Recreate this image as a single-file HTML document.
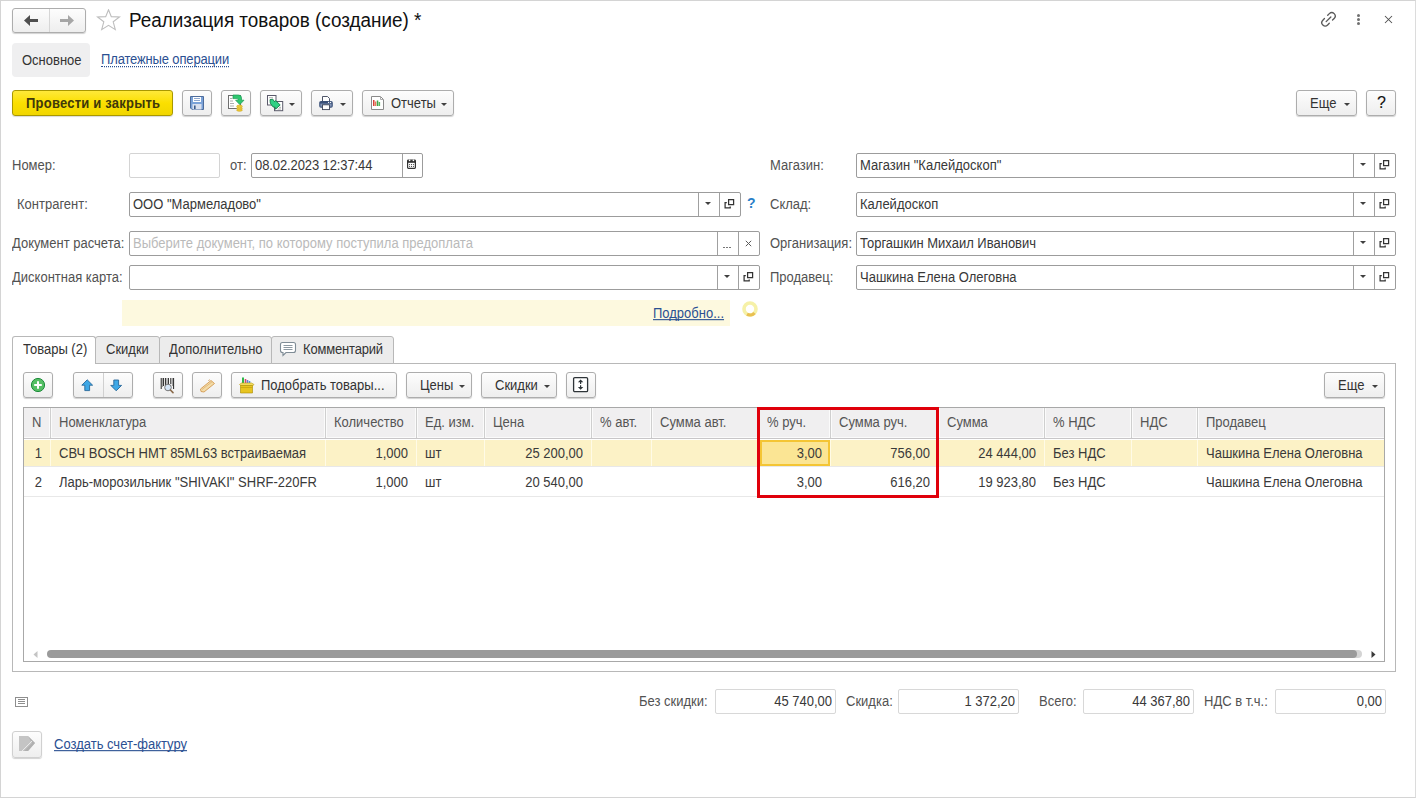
<!DOCTYPE html>
<html><head><meta charset="utf-8">
<style>
*{box-sizing:border-box;margin:0;padding:0}
html,body{width:1416px;height:798px;overflow:hidden;background:#fff}
body{font-family:"Liberation Sans",sans-serif;font-size:13px;color:#525252;position:relative}
.a{position:absolute}
.frame{left:0;top:0;width:1416px;height:798px;border:1px solid #d4d4d4;border-right-color:#dcdcdc}
.btn{position:absolute;border:1px solid #adadad;border-radius:3px;background:linear-gradient(#fdfdfd,#eeeeee);box-shadow:0 1px 1px rgba(0,0,0,.18);}
.lbl{position:absolute;white-space:nowrap;line-height:15px}
.inp{position:absolute;border:1px solid #9c9c9c;border-radius:2px;background:#fff;height:25px}
.inp .t{position:absolute;left:3px;top:4px;color:#383838;white-space:nowrap;line-height:15px}
.inp .d{position:absolute;top:0;bottom:0;border-left:1px solid #a0a0a0}
.tri{position:absolute;width:0;height:0;border-left:4px solid transparent;border-right:4px solid transparent;border-top:4px solid #444}
.tri2{position:absolute;width:0;height:0;border-left:3px solid transparent;border-right:3px solid transparent;border-top:3px solid #404040}
.col{position:absolute;top:0;height:30px;border-right:1px solid #dadada}
.hd{position:absolute;top:7px;white-space:nowrap;color:#555;line-height:15px}
.cell{position:absolute;white-space:nowrap;color:#3a3a3a;line-height:15px}
.r{text-align:right}
.lbl,.hd,.cell,.inp .t,.link{transform:scaleY(1.1);transform-origin:0 12px}
.link{color:#2b5092;text-decoration-skip-ink:none;white-space:nowrap;position:absolute;line-height:15px}
</style></head><body>
<div class="a frame"></div>

<!-- header -->
<div class="btn" style="left:12px;top:8px;width:74px;height:25px"></div>
<div class="a" style="left:49px;top:9px;width:1px;height:23px;background:#d6d6d6"></div>
<svg class="a" style="left:24px;top:15px" width="15" height="11" viewBox="0 0 15 11"><path d="M0 5.5 L6 0 V4 H14 V7 H6 V11 Z" fill="#4f4f4f"/></svg>
<svg class="a" style="left:60px;top:15px" width="15" height="11" viewBox="0 0 15 11"><path d="M14 5.5 L8 0 V4 H0 V7 H8 V11 Z" fill="#a6a6a6"/></svg>
<svg class="a" style="left:96px;top:9px" width="25" height="22" viewBox="0 0 25 22"><path d="M12.5 0.8 L15.3 7.6 L23.5 8 L17.2 12.8 L19.3 20.6 L12.5 16.3 L5.7 20.6 L7.8 12.8 L1.5 8 L9.7 7.6 Z" fill="none" stroke="#bdbdbd" stroke-width="1.1"/></svg>
<div class="lbl" style="left:129px;top:10px;font-size:18.9px;line-height:22px;color:#111;transform-origin:0 17.5px">Реализация товаров (создание) *</div>

<svg class="a" style="left:1318px;top:9px" width="21" height="21" viewBox="0 0 21 21"><g transform="translate(10.5 10.3) rotate(-45)" fill="none" stroke="#5a5a5a" stroke-width="1.35" stroke-linecap="round"><path d="M2.3 -3.4 H4.6 A3.4 3.4 0 0 1 4.6 3.4 H2.3"/><path d="M-2.3 3.4 H-4.6 A3.4 3.4 0 0 1 -4.6 -3.4 H-2.3"/><path d="M-3.3 0 H3.3"/></g></svg>
<div class="a" style="left:1357px;top:14px;width:3px;height:3px;border-radius:50%;background:#707070"></div>
<div class="a" style="left:1357px;top:18px;width:3px;height:3px;border-radius:50%;background:#707070"></div>
<div class="a" style="left:1357px;top:22px;width:3px;height:3px;border-radius:50%;background:#707070"></div>
<svg class="a" style="left:1384px;top:15px" width="9" height="9" viewBox="0 0 9 9"><path d="M1 1 L8 8 M8 1 L1 8" stroke="#505050" stroke-width="1.05"/></svg>

<!-- page tabs -->
<div class="a" style="left:12px;top:43px;width:78px;height:34px;background:#efeff0;border-radius:4px"></div>
<div class="lbl" style="left:22px;top:53px;color:#333">Основное</div>
<div class="link" style="left:101px;top:53px;border-bottom:1px dotted #2b5092;line-height:13px;letter-spacing:-0.15px;color:#2b5092">Платежные операции</div>


<!-- toolbar -->
<div class="a" style="left:12px;top:90px;width:161px;height:26px;border:1px solid #a99800;border-radius:3px;background:linear-gradient(#ffe93a,#fbdf00 50%,#f1d600);box-shadow:0 1px 1px rgba(0,0,0,.15)"></div>
<div class="lbl" style="left:26px;top:96px;font-weight:bold;color:#40380a;letter-spacing:0.22px">Провести и закрыть</div>

<div class="btn" style="left:182px;top:90px;width:30px;height:26px"></div>
<svg class="a" style="left:190px;top:96px" width="14" height="14" viewBox="0 0 14 14"><path d="M0.5 0.5 H13.5 V13.5 H2 L0.5 12 Z" fill="#7aa2d8" stroke="#4d6c9c"/><rect x="3" y="1" width="8" height="5" fill="#fff"/><path d="M4 2.5H10M4 4.5H10" stroke="#8fa8d0"/><rect x="2.5" y="8" width="9" height="5.5" fill="#d9e0ee"/><rect x="4" y="9.5" width="1.6" height="3.5" fill="#3a5a8a"/></svg>

<div class="btn" style="left:221px;top:90px;width:30px;height:26px"></div>
<svg class="a" style="left:227px;top:94px" width="18" height="18" viewBox="0 0 18 18"><rect x="1.5" y="1.5" width="12" height="13" fill="#fff" stroke="#6f6f6f"/><path d="M3 4.5H5.5M3 7H6M3 9.5H7M3 12H7" stroke="#999" stroke-width="0.8"/><path d="M6 1 H11.5 Q14.5 1 14.5 4 V6.2 H17 L12.8 10.6 L8.6 6.2 H11 V5.2 Q11 4.6 10.4 4.6 H6 Z" fill="#2ec770" stroke="#1b9a55" stroke-width="0.7"/><ellipse cx="12.5" cy="12.3" rx="2.9" ry="1.2" fill="#f4d448" stroke="#c9a318" stroke-width="0.6"/><ellipse cx="12.5" cy="14.2" rx="2.9" ry="1.2" fill="#f4d448" stroke="#c9a318" stroke-width="0.6"/><ellipse cx="12.5" cy="16.1" rx="2.9" ry="1.2" fill="#efc935" stroke="#c9a318" stroke-width="0.6"/></svg>

<div class="btn" style="left:260px;top:90px;width:42px;height:26px"></div>
<svg class="a" style="left:266px;top:94px" width="18" height="18" viewBox="0 0 18 18"><rect x="1.5" y="1.5" width="8.5" height="9.5" fill="#fff" stroke="#5a5a6a" stroke-width="1"/><path d="M3 3.7H7" stroke="#999" stroke-width="0.8"/><rect x="8.5" y="7.5" width="8.2" height="9.2" fill="#fff" stroke="#5a5a6a" stroke-width="1"/><path d="M11.5 15H15M13 13.3H15" stroke="#999" stroke-width="0.8"/><path d="M4 5.6 L6.8 5.2 L8.6 7.8 L9.6 6.6 L14.2 10.9 L9.6 15.2 L9.3 13.3 L7 12.9 L4.3 9.2 Z" fill="#30d184" stroke="#138048" stroke-width="0.9" stroke-linejoin="miter"/></svg>
<div class="tri2" style="left:289px;top:103px"></div>

<div class="btn" style="left:311px;top:90px;width:42px;height:26px"></div>
<svg class="a" style="left:318px;top:95px" width="16" height="16" viewBox="0 0 16 16"><path d="M4.5 1.5 H9.5 L11.5 3.5 V7 H4.5 Z" fill="#fff" stroke="#3c4458" stroke-width="0.9"/><rect x="1.2" y="6" width="13.6" height="6.8" rx="1.8" fill="#3a5078"/><rect x="2.4" y="8.6" width="11.2" height="3" fill="#8396b8"/><circle cx="10.6" cy="7.4" r="0.65" fill="#fff"/><circle cx="12.6" cy="7.4" r="0.65" fill="#fff"/><rect x="4.5" y="9.8" width="7" height="4.8" fill="#fff" stroke="#3c4458" stroke-width="0.9"/></svg>
<div class="tri2" style="left:340px;top:103px"></div>

<div class="btn" style="left:362px;top:90px;width:92px;height:26px"></div>
<svg class="a" style="left:371px;top:96px" width="13" height="14" viewBox="0 0 13 14"><path d="M0.5 0.5 H9.5 L12.5 3.5 V13.5 H0.5 Z" fill="#fff" stroke="#8a8a8a"/><path d="M9.5 0.5 V3.5 H12.5" fill="none" stroke="#aaa"/><rect x="2" y="4" width="1.5" height="6" fill="#d9413a"/><rect x="3.8" y="5.5" width="1.5" height="4.5" fill="#e57a5a"/><rect x="5.8" y="4.5" width="1.5" height="5.5" fill="#3fa34a"/><rect x="7.6" y="6" width="1.5" height="4" fill="#57b85f"/></svg>
<div class="lbl" style="left:391px;top:96px;color:#333">Отчеты</div>
<div class="tri2" style="left:441px;top:103px"></div>

<div class="btn" style="left:1296px;top:90px;width:61px;height:26px"></div>
<div class="lbl" style="left:1310px;top:96px;color:#333">Еще</div>
<div class="tri2" style="left:1344px;top:103px"></div>
<div class="btn" style="left:1366px;top:90px;width:30px;height:26px"></div>
<div class="lbl" style="left:1377px;top:94px;color:#111;font-size:16px;line-height:18px;-webkit-text-stroke:0.1px #111;transform:none">?</div>

<!-- form left -->
<div class="lbl" style="left:12px;top:158px">Номер:</div>
<div class="inp" style="left:129px;top:153px;width:91px;border-color:#d4d4d4"></div>
<div class="lbl" style="left:230px;top:158px">от:</div>
<div class="inp" style="left:251px;top:153px;width:172px"><div class="t" style="letter-spacing:-0.1px">08.02.2023 12:37:44</div><div class="d" style="left:150px"></div></div>
<svg class="a" style="left:407px;top:159px" width="9" height="10" viewBox="0 0 9 10"><rect x="0.6" y="1.2" width="7.8" height="8.2" rx="0.8" fill="#fff" stroke="#333" stroke-width="1.2"/><rect x="0.6" y="1.2" width="7.8" height="2.6" fill="#333"/><circle cx="2.6" cy="1.4" r="0.8" fill="#fff"/><circle cx="6.4" cy="1.4" r="0.8" fill="#fff"/><circle cx="2.6" cy="5.6" r="0.55" fill="#333"/><circle cx="4.5" cy="5.6" r="0.55" fill="#333"/><circle cx="6.4" cy="5.6" r="0.55" fill="#333"/><circle cx="2.6" cy="7.5" r="0.55" fill="#333"/><circle cx="4.5" cy="7.5" r="0.55" fill="#333"/><circle cx="6.4" cy="7.5" r="0.55" fill="#333"/></svg>
<div class="lbl" style="left:17px;top:197px">Контрагент:</div>
<div class="inp" style="left:129px;top:192px;width:612px"><div class="t">ООО "Мармеладово"</div><div class="d" style="left:568px"></div><div class="d" style="left:589px"></div></div><div class="tri2" style="left:705px;top:202px"></div><svg class="a" style="left:724px;top:199px" width="11" height="10" viewBox="0 0 11 10"><path d="M4.6 0.6h5v5h-5z M2.8 3.6H1.1V8.9H6.2V7.6" fill="none" stroke="#333" stroke-width="1.25"/></svg>
<div class="lbl" style="left:747px;top:196px;color:#2a7fc8;font-size:14px;font-weight:bold">?</div>
<div class="lbl" style="left:12px;top:236px">Документ расчета:</div>
<div class="inp" style="left:129px;top:231px;width:631px"><div class="t" style="color:#bababa">Выберите документ, по которому поступила предоплата</div><div class="d" style="left:587px"></div><div class="d" style="left:608px"></div></div><div class="a" style="left:723px;top:247px;width:2px;height:1px;background:#777"></div><div class="a" style="left:726px;top:247px;width:2px;height:1px;background:#777"></div><div class="a" style="left:729px;top:247px;width:2px;height:1px;background:#777"></div><svg class="a" style="left:745px;top:240px" width="7" height="7" viewBox="0 0 7 7"><path d="M0.8 0.8L6.2 6.2M6.2 0.8L0.8 6.2" stroke="#5a5a5a" stroke-width="1"/></svg>
<div class="lbl" style="left:12px;top:270px">Дисконтная карта:</div>
<div class="inp" style="left:129px;top:265px;width:631px"><div class="d" style="left:587px"></div><div class="d" style="left:608px"></div></div><div class="tri2" style="left:724px;top:275px"></div><svg class="a" style="left:743px;top:272px" width="11" height="10" viewBox="0 0 11 10"><path d="M4.6 0.6h5v5h-5z M2.8 3.6H1.1V8.9H6.2V7.6" fill="none" stroke="#333" stroke-width="1.25"/></svg>
<div class="a" style="left:122px;top:300px;width:608px;height:26px;background:#fdf9df"></div>
<div class="link" style="left:653px;top:306px;text-decoration:underline">Подробно...</div>
<svg class="a" style="left:740px;top:299px" width="20" height="20" viewBox="0 0 20 20"><circle cx="10" cy="10" r="6" fill="none" stroke="#f6f1a8" stroke-width="3.6"/><path d="M7 15.2 A6 6 0 0 0 14.5 14" fill="none" stroke="#e9c052" stroke-width="3.2"/></svg>
<!-- form right -->
<div class="lbl" style="left:770px;top:158px">Магазин:</div>
<div class="inp" style="left:856px;top:153px;width:540px"><div class="t">Магазин "Калейдоскоп"</div><div class="d" style="left:496px"></div><div class="d" style="left:517px"></div></div><div class="tri2" style="left:1360px;top:163px"></div><svg class="a" style="left:1379px;top:160px" width="11" height="10" viewBox="0 0 11 10"><path d="M4.6 0.6h5v5h-5z M2.8 3.6H1.1V8.9H6.2V7.6" fill="none" stroke="#333" stroke-width="1.25"/></svg>
<div class="lbl" style="left:770px;top:197px">Склад:</div>
<div class="inp" style="left:856px;top:192px;width:540px"><div class="t">Калейдоскоп</div><div class="d" style="left:496px"></div><div class="d" style="left:517px"></div></div><div class="tri2" style="left:1360px;top:202px"></div><svg class="a" style="left:1379px;top:199px" width="11" height="10" viewBox="0 0 11 10"><path d="M4.6 0.6h5v5h-5z M2.8 3.6H1.1V8.9H6.2V7.6" fill="none" stroke="#333" stroke-width="1.25"/></svg>
<div class="lbl" style="left:770px;top:236px">Организация:</div>
<div class="inp" style="left:856px;top:231px;width:540px"><div class="t">Торгашкин Михаил Иванович</div><div class="d" style="left:496px"></div><div class="d" style="left:517px"></div></div><div class="tri2" style="left:1360px;top:241px"></div><svg class="a" style="left:1379px;top:238px" width="11" height="10" viewBox="0 0 11 10"><path d="M4.6 0.6h5v5h-5z M2.8 3.6H1.1V8.9H6.2V7.6" fill="none" stroke="#333" stroke-width="1.25"/></svg>
<div class="lbl" style="left:770px;top:270px">Продавец:</div>
<div class="inp" style="left:856px;top:265px;width:540px"><div class="t">Чашкина Елена Олеговна</div><div class="d" style="left:496px"></div><div class="d" style="left:517px"></div></div><div class="tri2" style="left:1360px;top:275px"></div><svg class="a" style="left:1379px;top:272px" width="11" height="10" viewBox="0 0 11 10"><path d="M4.6 0.6h5v5h-5z M2.8 3.6H1.1V8.9H6.2V7.6" fill="none" stroke="#333" stroke-width="1.25"/></svg>

<!-- tabs -->
<div class="a" style="left:12px;top:363px;width:1384px;height:309px;border:1px solid #b8b8b8"></div>
<div class="a" style="left:95px;top:336px;width:65px;height:28px;background:#ececec;border:1px solid #b8b8b8;border-radius:3px 3px 0 0"></div>
<div class="a" style="left:159px;top:336px;width:113px;height:28px;background:#ececec;border:1px solid #b8b8b8;border-radius:3px 3px 0 0"></div>
<div class="a" style="left:271px;top:336px;width:123px;height:28px;background:#ececec;border:1px solid #b8b8b8;border-radius:3px 3px 0 0"></div>
<div class="a" style="left:12px;top:336px;width:84px;height:28px;background:#fff;border:1px solid #b8b8b8;border-bottom:none;border-radius:3px 3px 0 0"></div>
<div class="lbl" style="left:23px;top:342px;color:#333">Товары (2)</div>
<div class="lbl" style="left:106px;top:342px;color:#333">Скидки</div>
<div class="lbl" style="left:169px;top:342px;color:#333">Дополнительно</div>
<svg class="a" style="left:279px;top:341px" width="18" height="16" viewBox="0 0 18 16"><path d="M3.5 1.5 H14.5 Q16.5 1.5 16.5 3.5 V9.5 Q16.5 11.5 14.5 11.5 H7 L4 14.5 V11.5 H3.5 Q1.5 11.5 1.5 9.5 V3.5 Q1.5 1.5 3.5 1.5 Z" fill="#fff" stroke="#7f8c96" stroke-width="1.1"/><path d="M4.5 4.5H13.5M4.5 6.5H13.5M4.5 8.5H13.5" stroke="#7f8c96" stroke-width="0.9"/></svg>
<div class="lbl" style="left:303px;top:342px;color:#333;letter-spacing:-0.18px">Комментарий</div>

<!-- table toolbar -->
<div class="btn" style="left:23px;top:372px;width:30px;height:26px"></div>
<svg class="a" style="left:30px;top:377px" width="16" height="16" viewBox="0 0 16 16"><circle cx="8" cy="8" r="6.6" fill="#55bf64" stroke="#1d8b3b" stroke-width="1"/><path d="M8 4.2V11.8M4.2 8H11.8" stroke="#fff" stroke-width="2"/></svg>
<div class="btn" style="left:73px;top:372px;width:60px;height:26px"></div>
<div class="a" style="left:103px;top:373px;width:1px;height:24px;background:#d0d0d0"></div>
<svg class="a" style="left:81px;top:379px" width="13" height="13" viewBox="0 0 13 13"><path d="M6.2 0.8 L11.6 6.2 H8.6 V11.6 H3.8 V6.2 H0.8 Z" fill="#3ea8e6" stroke="#28689a" stroke-width="0.9" stroke-linejoin="miter"/></svg>
<svg class="a" style="left:110px;top:379px" width="13" height="13" viewBox="0 0 13 13"><path d="M6.2 11.8 L11.6 6.4 H8.6 V1 H3.8 V6.4 H0.8 Z" fill="#3ea8e6" stroke="#28689a" stroke-width="0.9" stroke-linejoin="miter"/></svg>
<div class="btn" style="left:153px;top:372px;width:30px;height:26px"></div>
<svg class="a" style="left:160px;top:377px" width="16" height="17" viewBox="0 0 16 17"><path d="M1.2 1v11M3.6 1v8M5.6 1v7M8.4 1v6M10.8 1v6M13.6 1v11" stroke="#222" stroke-width="1"/><path d="M2.4 1v9M7 1v6M12.4 1v8" stroke="#555" stroke-width="0.6"/><circle cx="8" cy="10.5" r="3.3" fill="#d6e6f8" stroke="#777" stroke-width="1"/><path d="M10.4 13 L13 15.6" stroke="#8a6a4a" stroke-width="1.6" stroke-linecap="round"/></svg>
<div class="btn" style="left:192px;top:372px;width:30px;height:26px"></div>
<svg class="a" style="left:199px;top:379px" width="17" height="14" viewBox="0 0 17 14"><path d="M1.5 10 L12 1.5 L15.5 4.5 L5 13 L2 12.5 Z" fill="#f3dca8" stroke="#d49a50" stroke-width="0.9"/><path d="M3 10.5 L13 2.8" stroke="#e0b070" stroke-width="0.8"/><path d="M9.5 2 L10.5 0.5" stroke="#c89048" stroke-width="0.8"/></svg>
<div class="btn" style="left:231px;top:372px;width:166px;height:26px"></div>
<svg class="a" style="left:239px;top:377px" width="16" height="17" viewBox="0 0 16 17"><path d="M4 0.5v8" stroke="#2db84a" stroke-width="2"/><path d="M6.5 2v7" stroke="#d84a6a" stroke-width="1.6"/><path d="M8.5 3v6" stroke="#6a7ad8" stroke-width="1.6"/><path d="M10.5 4v5" stroke="#4a9ad8" stroke-width="1.6"/><path d="M0.5 7.5 L2.5 6 H12.5 L15 7.5 L13.5 9 H2 Z" fill="#f2dc60" stroke="#b89a10" stroke-width="0.6"/><path d="M1.5 8.5 H13.5 V16 H1.5 Z" fill="#e7c420" stroke="#a88a00" stroke-width="0.6"/><path d="M1.5 10.5 H13.5" stroke="#c8a410" stroke-width="0.8"/></svg>
<div class="lbl" style="left:261px;top:378px;color:#333">Подобрать товары...</div>
<div class="btn" style="left:406px;top:372px;width:66px;height:26px"></div>
<div class="lbl" style="left:420px;top:378px;color:#333">Цены</div>
<div class="tri2" style="left:459px;top:385px"></div>
<div class="btn" style="left:481px;top:372px;width:76px;height:26px"></div>
<div class="lbl" style="left:495px;top:378px;color:#333">Скидки</div>
<div class="tri2" style="left:544px;top:385px"></div>
<div class="btn" style="left:566px;top:372px;width:30px;height:26px"></div>
<svg class="a" style="left:572px;top:376px" width="17" height="17" viewBox="0 0 17 17"><rect x="1.6" y="1.6" width="14" height="14" rx="1.2" fill="#fff" stroke="#2e3438" stroke-width="1.3"/><path d="M5.9 6.2 L8.6 3.4 L11.3 6.2 Z M5.9 11 L8.6 13.8 L11.3 11 Z" fill="#2e3438"/><path d="M8.6 5.5 V8 M8.6 9.2 V11.7" stroke="#2e3438" stroke-width="1.2"/></svg>
<div class="btn" style="left:1324px;top:372px;width:61px;height:26px"></div>
<div class="lbl" style="left:1338px;top:378px;color:#333">Еще</div>
<div class="tri2" style="left:1372px;top:385px"></div>

<!-- table -->
<div class="a" style="left:23px;top:407px;width:1362px;height:255px;border:1px solid #a8a8a8;overflow:hidden">
<div class="a" style="left:0;top:0;width:1360px;height:31px;background:#f0eff0;border-bottom:1px solid #c8c6c8"><div class="a" style="left:0;top:29px;width:1360px;height:1px;background:#fbfbfb"></div><div class="a" style="left:25px;top:0;width:1px;height:29px;background:#fbfbfb"></div><div class="a" style="left:26px;top:0;width:1px;height:30px;background:#cfcfcf"></div><div class="a" style="left:27px;top:0;width:1px;height:29px;background:#fbfbfb"></div><div class="hd" style="left:8px">N</div><div class="a" style="left:300px;top:0;width:1px;height:29px;background:#fbfbfb"></div><div class="a" style="left:301px;top:0;width:1px;height:30px;background:#cfcfcf"></div><div class="a" style="left:302px;top:0;width:1px;height:29px;background:#fbfbfb"></div><div class="hd" style="left:35px">Номенклатура</div><div class="a" style="left:391px;top:0;width:1px;height:29px;background:#fbfbfb"></div><div class="a" style="left:392px;top:0;width:1px;height:30px;background:#cfcfcf"></div><div class="a" style="left:393px;top:0;width:1px;height:29px;background:#fbfbfb"></div><div class="hd" style="left:310px">Количество</div><div class="a" style="left:459px;top:0;width:1px;height:29px;background:#fbfbfb"></div><div class="a" style="left:460px;top:0;width:1px;height:30px;background:#cfcfcf"></div><div class="a" style="left:461px;top:0;width:1px;height:29px;background:#fbfbfb"></div><div class="hd" style="left:401px">Ед. изм.</div><div class="a" style="left:566px;top:0;width:1px;height:29px;background:#fbfbfb"></div><div class="a" style="left:567px;top:0;width:1px;height:30px;background:#cfcfcf"></div><div class="a" style="left:568px;top:0;width:1px;height:29px;background:#fbfbfb"></div><div class="hd" style="left:469px">Цена</div><div class="a" style="left:626px;top:0;width:1px;height:29px;background:#fbfbfb"></div><div class="a" style="left:627px;top:0;width:1px;height:30px;background:#cfcfcf"></div><div class="a" style="left:628px;top:0;width:1px;height:29px;background:#fbfbfb"></div><div class="hd" style="left:576px">% авт.</div><div class="a" style="left:733px;top:0;width:1px;height:29px;background:#fbfbfb"></div><div class="a" style="left:734px;top:0;width:1px;height:30px;background:#cfcfcf"></div><div class="a" style="left:735px;top:0;width:1px;height:29px;background:#fbfbfb"></div><div class="hd" style="left:636px">Сумма авт.</div><div class="a" style="left:805px;top:0;width:1px;height:29px;background:#fbfbfb"></div><div class="a" style="left:806px;top:0;width:1px;height:30px;background:#cfcfcf"></div><div class="a" style="left:807px;top:0;width:1px;height:29px;background:#fbfbfb"></div><div class="hd" style="left:743px">% руч.</div><div class="a" style="left:913px;top:0;width:1px;height:29px;background:#fbfbfb"></div><div class="a" style="left:914px;top:0;width:1px;height:30px;background:#cfcfcf"></div><div class="a" style="left:915px;top:0;width:1px;height:29px;background:#fbfbfb"></div><div class="hd" style="left:815px">Сумма руч.</div><div class="a" style="left:1019px;top:0;width:1px;height:29px;background:#fbfbfb"></div><div class="a" style="left:1020px;top:0;width:1px;height:30px;background:#cfcfcf"></div><div class="a" style="left:1021px;top:0;width:1px;height:29px;background:#fbfbfb"></div><div class="hd" style="left:923px">Сумма</div><div class="a" style="left:1106px;top:0;width:1px;height:29px;background:#fbfbfb"></div><div class="a" style="left:1107px;top:0;width:1px;height:30px;background:#cfcfcf"></div><div class="a" style="left:1108px;top:0;width:1px;height:29px;background:#fbfbfb"></div><div class="hd" style="left:1029px">% НДС</div><div class="a" style="left:1172px;top:0;width:1px;height:29px;background:#fbfbfb"></div><div class="a" style="left:1173px;top:0;width:1px;height:30px;background:#cfcfcf"></div><div class="a" style="left:1174px;top:0;width:1px;height:29px;background:#fbfbfb"></div><div class="hd" style="left:1116px">НДС</div><div class="hd" style="left:1182px">Продавец</div></div>
<div class="a" style="left:0;top:32px;width:1360px;height:26px;background:#fcf2c6"></div><div class="a" style="left:0;top:58px;width:1360px;height:1px;background:#e8e8e8"></div><div class="a" style="left:26px;top:32px;width:1px;height:26px;background:#fffbe6"></div><div class="a" style="left:301px;top:32px;width:1px;height:26px;background:#fffbe6"></div><div class="a" style="left:392px;top:32px;width:1px;height:26px;background:#fffbe6"></div><div class="a" style="left:460px;top:32px;width:1px;height:26px;background:#fffbe6"></div><div class="a" style="left:567px;top:32px;width:1px;height:26px;background:#fffbe6"></div><div class="a" style="left:627px;top:32px;width:1px;height:26px;background:#fffbe6"></div><div class="a" style="left:734px;top:32px;width:1px;height:26px;background:#fffbe6"></div><div class="a" style="left:806px;top:32px;width:1px;height:26px;background:#fffbe6"></div><div class="a" style="left:914px;top:32px;width:1px;height:26px;background:#fffbe6"></div><div class="a" style="left:1020px;top:32px;width:1px;height:26px;background:#fffbe6"></div><div class="a" style="left:1107px;top:32px;width:1px;height:26px;background:#fffbe6"></div><div class="a" style="left:1173px;top:32px;width:1px;height:26px;background:#fffbe6"></div><div class="a" style="left:736px;top:32px;width:70px;height:26px;background:#fbe594;border:2px solid #f4c534"></div><div class="cell r" style="left:0px;width:18px;top:38px">1</div><div class="cell" style="left:35px;top:38px">СВЧ BOSCH HMT 85ML63 встраиваемая</div><div class="cell r" style="left:301px;width:83px;top:38px">1,000</div><div class="cell" style="left:401px;top:38px">шт</div><div class="cell r" style="left:460px;width:99px;top:38px">25 200,00</div><div class="cell r" style="left:734px;width:64px;top:38px">3,00</div><div class="cell r" style="left:806px;width:100px;top:38px">756,00</div><div class="cell r" style="left:914px;width:98px;top:38px">24 444,00</div><div class="cell" style="left:1029px;top:38px">Без НДС</div><div class="cell" style="left:1182px;top:38px">Чашкина Елена Олеговна</div><div class="a" style="left:0;top:88px;width:1360px;height:1px;background:#e8e8e8"></div><div class="cell r" style="left:0px;width:18px;top:67px">2</div><div class="cell" style="left:35px;top:67px">Ларь-морозильник "SHIVAKI" SHRF-220FR</div><div class="cell r" style="left:301px;width:83px;top:67px">1,000</div><div class="cell" style="left:401px;top:67px">шт</div><div class="cell r" style="left:460px;width:99px;top:67px">20 540,00</div><div class="cell r" style="left:734px;width:64px;top:67px">3,00</div><div class="cell r" style="left:806px;width:100px;top:67px">616,20</div><div class="cell r" style="left:914px;width:98px;top:67px">19 923,80</div><div class="cell" style="left:1029px;top:67px">Без НДС</div><div class="cell" style="left:1182px;top:67px">Чашкина Елена Олеговна</div>
<div class="a" style="left:1326px;top:242px;width:12px;height:8px;border-radius:4px;background:#d4d4d4"></div><div class="a" style="left:23px;top:242px;width:1310px;height:8px;border-radius:4px;background:#9a9a9a"></div>
<svg class="a" style="left:9px;top:243px" width="5" height="7" viewBox="0 0 5 7"><path d="M4.5 0 L0.5 3.5 L4.5 7 Z" fill="#c4c4c4"/></svg>
<svg class="a" style="left:1347px;top:243px" width="5" height="7" viewBox="0 0 5 7"><path d="M0.5 0 L4.5 3.5 L0.5 7 Z" fill="#3a3a3a"/></svg>
</div>
<div class="a" style="left:757px;top:407px;width:182px;height:91px;border:3px solid #e0000b"></div>

<!-- totals -->
<svg class="a" style="left:15px;top:697px" width="13" height="10" viewBox="0 0 13 10"><rect x="0.5" y="0.5" width="12" height="9" fill="#fff" stroke="#8e8e8e"/><path d="M3 2.5H10M3 4.5H10M3 6.5H10" stroke="#8e8e8e" stroke-width="1"/></svg>
<div class="lbl" style="left:639px;top:694px">Без скидки:</div>
<div class="inp" style="left:715px;top:689px;width:121px;border-color:#d8d8d8"><div class="t r" style="left:auto;right:3px">45 740,00</div></div>
<div class="lbl" style="left:846px;top:694px">Скидка:</div>
<div class="inp" style="left:898px;top:689px;width:121px;border-color:#d8d8d8"><div class="t r" style="left:auto;right:3px">1 372,20</div></div>
<div class="lbl" style="left:1039px;top:694px">Всего:</div>
<div class="inp" style="left:1083px;top:689px;width:111px;border-color:#d8d8d8"><div class="t r" style="left:auto;right:3px">44 367,80</div></div>
<div class="lbl" style="left:1204px;top:694px">НДС в т.ч.:</div>
<div class="inp" style="left:1275px;top:689px;width:111px;border-color:#d8d8d8"><div class="t r" style="left:auto;right:3px">0,00</div></div>

<!-- footer -->
<div class="btn" style="left:12px;top:731px;width:30px;height:27px;border-color:#d0d0d0"></div>
<svg class="a" style="left:19px;top:736px" width="17" height="16" viewBox="0 0 17 16"><path d="M0 0 H9 L16 7 L9 15 H0 Z" fill="#c4c4c4"/><path d="M9 0 L16 7 L9 15 L5 15 L13 7 Z" fill="#b0b0b0"/><path d="M3 15 L13 5" stroke="#e8e8e8" stroke-width="1"/></svg>
<div class="link" style="left:54px;top:737px;text-decoration:underline">Создать счет-фактуру</div>

</body></html>
